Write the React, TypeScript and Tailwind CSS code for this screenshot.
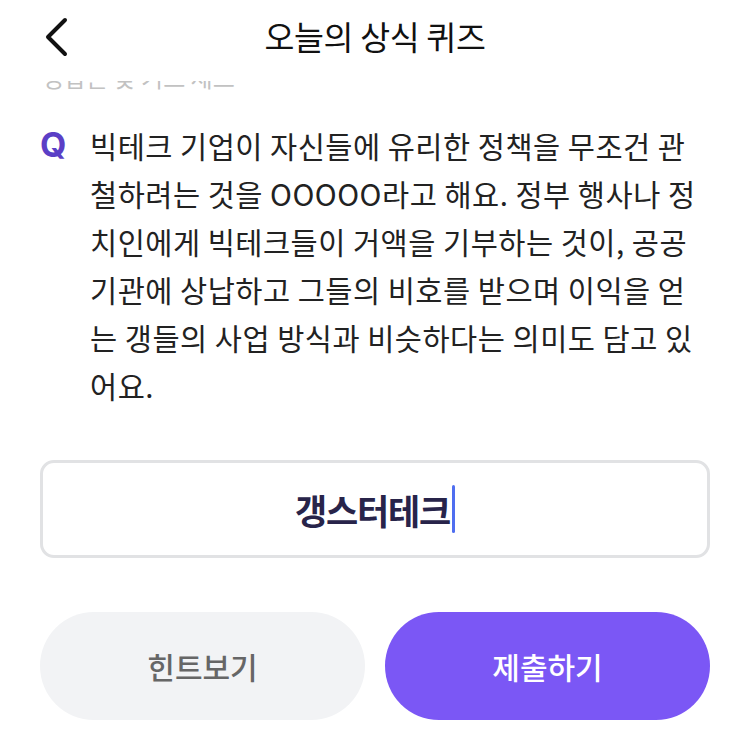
import React from "react";

const font = { fontFamily: '"Noto Sans CJK KR", "Noto Sans", sans-serif' };

export default function App() {
  const lines = [
    "빅테크 기업이 자신들에 유리한 정책을 무조건 관",
    "철하려는 것을 OOOOO라고 해요. 정부 행사나 정",
    "치인에게 빅테크들이 거액을 기부하는 것이, 공공",
    "기관에 상납하고 그들의 비호를 받으며 이익을 얻",
    "는 갱들의 사업 방식과 비슷하다는 의미도 담고 있",
    "어요.",
  ];
  return (
    <div className="w-[750px] h-[744px] bg-white overflow-hidden relative" style={font}>
      <div className="h-[81px] flex items-center justify-center relative">
        <svg className="absolute left-[40px] top-[16px]" width="32" height="42" viewBox="0 0 32 42">
          <path d="M25 4 L8 21 L25 38" fill="none" stroke="#111" strokeWidth="4" strokeLinecap="round" strokeLinejoin="round" />
        </svg>
        <div className="text-[32.5px] text-[#111] leading-none mt-[-9px] tracking-[-0.3px]">오늘의 상식 퀴즈</div>
      </div>
      <div className="h-[11px] overflow-hidden pl-[42px]">
        <div className="text-[24px] leading-[30px] text-[#c2c2c2] mt-[-19px]">정답은 맞 기르 세트</div>
      </div>
      <div className="flex pl-[40px] pt-[29px]">
        <div className="w-[50px] text-[34px] font-bold text-[#5b3fc6] leading-[48px]" style={{ fontFamily: '"Inter", "Liberation Sans", sans-serif' }}>Q</div>
        <div className="text-[29.5px] leading-[48px] text-[#222] tracking-[0.5px]">
          {lines.map((l, i) => (
            <div key={i} className="whitespace-nowrap">{l}</div>
          ))}
        </div>
      </div>
      <div className="px-[40px] mt-[51px]">
        <div className="h-[98px] border-[3px] border-[#e1e2e4] rounded-[14px] flex items-center justify-center">
          <span className="text-[35px] font-bold text-[#28244a] leading-none tracking-[-1.2px]">갱스터테크</span>
          <span className="w-[3px] h-[48px] bg-[#4f6ef0] rounded-full ml-[2px]" />
        </div>
      </div>
      <div className="px-[40px] mt-[54px] flex gap-[20px]">
        <button className="flex-1 h-[108px] rounded-full bg-[#f2f3f5] text-[#666] text-[30px] font-medium flex items-center justify-center">힌트보기</button>
        <button className="flex-1 h-[108px] rounded-full bg-[#7b57f5] text-white text-[30px] font-medium flex items-center justify-center">제출하기</button>
      </div>
    </div>
  );
}
